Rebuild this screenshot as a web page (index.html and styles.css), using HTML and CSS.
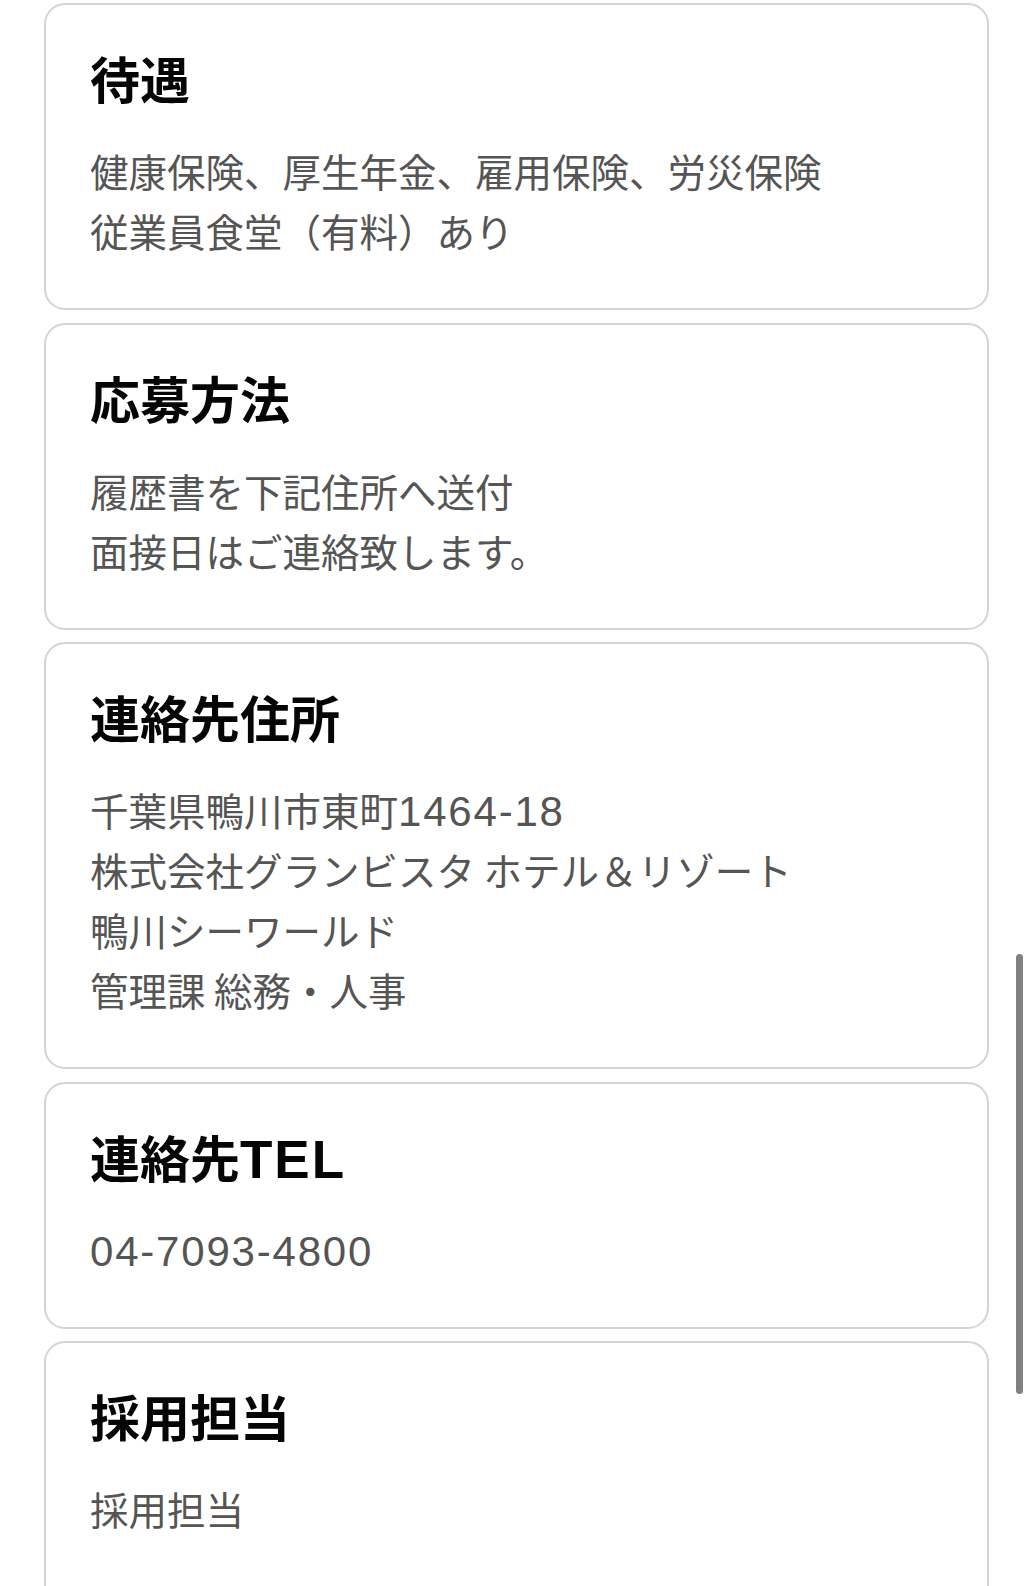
FILE: index.html
```html
<!DOCTYPE html>
<html lang="ja">
<head>
<meta charset="utf-8">
<link rel="stylesheet" href="styles.css">
</head>
<body>
<div class="page">
<main class="list">
  <section class="card">
    <h2 class="card-title">待遇</h2>
    <div class="card-body">
      <span class="line">健康保険、厚生年金、雇用保険、労災保険</span>
      <span class="line">従業員食堂（有料）あり</span>
    </div>
  </section>
  <section class="card">
    <h2 class="card-title">応募方法</h2>
    <div class="card-body">
      <span class="line">履歴書を下記住所へ送付</span>
      <span class="line">面接日はご連絡致します。</span>
    </div>
  </section>
  <section class="card">
    <h2 class="card-title">連絡先住所</h2>
    <div class="card-body">
      <span class="line">千葉県鴨川市東町<span class="num">1464-18</span></span>
      <span class="line">株式会社グランビスタ ホテル＆リゾート</span>
      <span class="line">鴨川シーワールド</span>
      <span class="line">管理課 総務・人事</span>
    </div>
  </section>
  <section class="card">
    <h2 class="card-title">連絡先<span class="num-title">TEL</span></h2>
    <div class="card-body">
      <span class="line"><span class="num">04-7093-4800</span></span>
    </div>
  </section>
  <section class="card card-last">
    <h2 class="card-title">採用担当</h2>
    <div class="card-body">
      <span class="line">採用担当</span>
    </div>
  </section>
</main>
</div>
<div class="scroll-thumb"></div>
</body>
</html>
```
FILE: styles.css
```css
html, body {
  margin: 0;
  padding: 0;
  background: #ffffff;
}
body {
  font-family: "Noto Sans CJK JP", sans-serif;
}
.page {
  height: 1586px;
  overflow: hidden;
}
.list {
  display: flex;
  flex-direction: column;
  gap: 12.5px;
  padding: 3px 0 0 44px;
  width: 945px;
}
.card {
  border: 2px solid #d4d4d4;
  border-radius: 21px;
  padding: 36px 44px 48px;
  background: #fff;
}
.card-last {
  min-height: 320px;
}
.card-title {
  display: block;
  height: 72px;
  margin: 0 0 27px;
  font-size: 50px;
  line-height: 72px;
  font-weight: 700;
  color: #050505;
  overflow: hidden;
  white-space: nowrap;
}
.num-title {
  font-family: "Liberation Sans", sans-serif;
  font-size: 53px;
  letter-spacing: 2px;
}
.card-body {
  display: flex;
  flex-direction: column;
  font-size: 38.5px;
  color: #555555;
  font-weight: 400;
}
.line {
  display: block;
  height: 60px;
  line-height: 60px;
  white-space: nowrap;
}
.num {
  font-family: "Liberation Sans", sans-serif;
  font-size: 42px;
  letter-spacing: 1.8px;
}
.scroll-thumb {
  position: fixed;
  left: 1016px;
  top: 954px;
  width: 7px;
  height: 440px;
  border-radius: 4px;
  background: #808080;
}
```
